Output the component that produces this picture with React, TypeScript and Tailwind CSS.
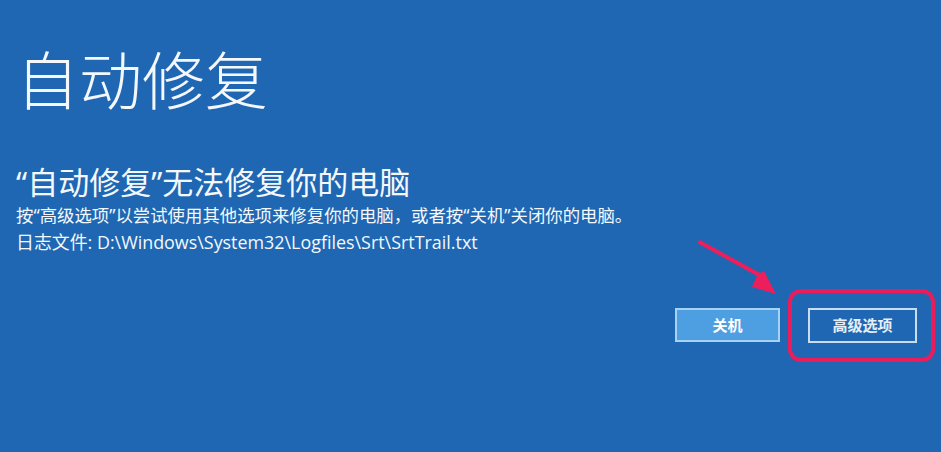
export default function App() {
  return (
    <div
      className="relative h-[452px] w-full overflow-hidden bg-[#1f67b2] text-[#f4f8fc]"
      style={{ fontFamily: '"Noto Sans", "Noto Sans CJK SC", sans-serif' }}
    >
      <div className="flex flex-col pl-[16px]">
        <h1 className="mt-[49px] text-[63px] font-light leading-[62px]">自动修复</h1>
        <h2 className="mt-[56px] text-[31px] font-normal leading-[31px]">“自动修复”无法修复你的电脑</h2>
        <p className="mt-[8px] text-[17.4px] leading-[18px]">
          按“高级选项”以尝试使用其他选项来修复你的电脑，或者按“关机”关闭你的电脑。
        </p>
        <p
          className="mt-[8px] text-[17.9px] leading-[20px]"
          style={{ fontFamily: '"Open Sans", "Noto Sans CJK SC", sans-serif' }}
        >
          日志文件: D:\Windows\System32\Logfiles\Srt\SrtTrail.txt
        </p>
        <div className="mt-[56px] flex justify-end gap-[28px] pr-[24px]">
          <button className="h-[34px] w-[105px] border-2 border-[#a8d2f3] bg-[#4d9fe1] text-[15px] font-bold text-white">
            关机
          </button>
          <div className="relative">
            <button className="h-[35px] w-[109px] border-2 border-[#c9ddf1] bg-transparent text-[15px] font-bold text-[#e6eef8]">
              高级选项
            </button>
            <div className="pointer-events-none absolute -left-[20px] -right-[18px] -top-[19px] -bottom-[19px] rounded-[13px] border-4 border-[#ea1d5c]" />
          </div>
        </div>
      </div>
      <svg className="pointer-events-none absolute left-0 top-0" width="941" height="452">
        <polygon points="697,243 757,276 752,287 776,294 764,271 760,273 700,240" fill="#ec1e5c" />
      </svg>
    </div>
  );
}
